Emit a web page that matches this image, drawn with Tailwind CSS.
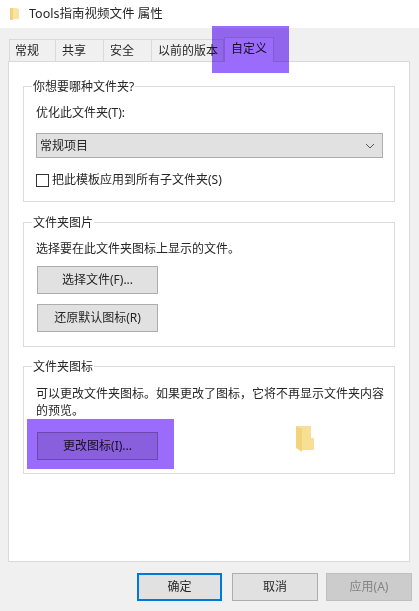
<!doctype html>
<html><head><meta charset="utf-8"><script src="https://cdn.jsdelivr.net/npm/@tailwindcss/browser@4"></script></head>
<body class="m-0">
<div class="relative w-[419px] h-[611px] overflow-hidden bg-[#f0f0f0] text-[12px] leading-[16px] text-[#262626] font-['Noto_Sans','Noto_Sans_CJK_SC',sans-serif]">
  <!-- title bar -->
  <div class="h-[28px] bg-white flex items-center pl-[10px] gap-[10px]">
    <svg class="blur-[0.4px]" width="9" height="13" viewBox="0 0 9 13"><path d="M0 0h6l3 1v10H3l-3 1z" fill="#f9e3a0"/><path d="M0 0h3v12H0z" fill="#f2d27c"/></svg>
    <span class="text-[12.5px]">Tools指南视频文件 属性</span>
  </div>
  <!-- tabs -->
  <div class="h-[33px] pl-[9px] flex items-end">
    <div class="w-[47px] h-[22px] pl-[5px] border border-b-0 border-[#d9d9d9] flex items-center">常规</div>
    <div class="w-[48px] h-[22px] pl-[6px] border border-l-0 border-b-0 border-[#d9d9d9] flex items-center">共享</div>
    <div class="w-[48px] h-[22px] pl-[6px] border border-l-0 border-b-0 border-[#d9d9d9] flex items-center">安全</div>
    <div class="w-[72px] h-[22px] pl-[6px] border border-l-0 border-b-0 border-[#d9d9d9] flex items-center">以前的版本</div>
    <div class="w-[50px] h-[25px] -mb-px relative z-10 pb-[3px] border border-b-0 border-[#d9d9d9] bg-white flex items-center justify-center">自定义</div>
  </div>
  <!-- panel -->
  <div class="ml-[8px] w-[402px] h-[501px] border border-[#d9d9d9] bg-white pt-[24px] px-[14px]">
    <!-- group 1 -->
    <div class="relative h-[116px] border border-[#dcdcdc] pt-[18px] pl-[12px] pr-[11px]">
      <span class="absolute -top-[8px] left-[8px] bg-white px-[1px]">你想要哪种文件夹?</span>
      <div class="h-[16px]">优化此文件夹(T):</div>
      <div class="mt-[12px] h-[25px] border border-[#adadad] bg-[#e1e1e1] flex items-center justify-between pl-[3px] pr-[7px]">
        <span>常规项目</span>
        <svg width="10" height="6" viewBox="0 0 10 6"><path d="M1 1l4 4 4-4" fill="none" stroke="#555" stroke-width="1"/></svg>
      </div>
      <div class="mt-[14px] flex items-center gap-[3px]">
        <div class="w-[13px] h-[13px] border border-[#333] bg-white"></div>
        <span>把此模板应用到所有子文件夹(S)</span>
      </div>
    </div>
    <!-- group 2 -->
    <div class="relative mt-[20px] h-[125px] border border-[#dcdcdc] pt-[18px] pl-[13px]">
      <span class="absolute -top-[8px] left-[8px] bg-white px-[1px]">文件夹图片</span>
      <div class="h-[16px] -ml-px">选择要在此文件夹图标上显示的文件。</div>
      <div class="mt-[9px] w-[121px] h-[28px] border border-[#adadad] bg-[#e1e1e1] flex items-center justify-center">选择文件(F)...</div>
      <div class="mt-[10px] w-[121px] h-[28px] border border-[#adadad] bg-[#e1e1e1] flex items-center justify-center">还原默认图标(R)</div>
    </div>
    <!-- group 3 -->
    <div class="relative mt-[19px] h-[108px] border border-[#dcdcdc] pt-[18px] pl-[12px] pr-[8px]">
      <span class="absolute -top-[8px] left-[8px] bg-white px-[1px]">文件夹图标</span>
      <p class="leading-[17px] w-[350px]">可以更改文件夹图标。如果更改了图标，它将不再显示文件夹内容的预览。</p>
      <div class="mt-[13px] flex items-start justify-between">
        <div class="ml-px w-[121px] h-[28px] border border-[#adadad] bg-[#e1e1e1] flex items-center justify-center">更改图标(I)...</div>
        <svg class="mr-[72px] -mt-[6px] blur-[0.4px]" width="18" height="27" viewBox="0 0 18 27"><path d="M0 0h15v12h3v12H6z" fill="#f8df96"/><path d="M0 0l6 3v23l-6-4z" fill="#f3d37c"/></svg>
      </div>
    </div>
  </div>
  <!-- footer buttons -->
  <div class="absolute top-[573px] left-[137px] flex">
    <div class="w-[85px] h-[28px] border-2 border-[#0078d7] bg-[#e1e1e1] flex items-center justify-center">确定</div>
    <div class="ml-[10px] w-[86px] h-[28px] border border-[#adadad] bg-[#e1e1e1] flex items-center justify-center">取消</div>
    <div class="ml-[8px] w-[86px] h-[28px] border border-[#bfbfbf] bg-[#cccccc] text-[#838383] flex items-center justify-center">应用(A)</div>
  </div>
  <!-- highlights -->
  <div class="absolute z-20 left-[212px] top-[26px] w-[77px] h-[47px] bg-[#9b6cfb] mix-blend-multiply"></div>
  <div class="absolute z-20 left-[27px] top-[419px] w-[147px] h-[50px] bg-[#9b6cfb] mix-blend-multiply"></div>
</div>
</body></html>
